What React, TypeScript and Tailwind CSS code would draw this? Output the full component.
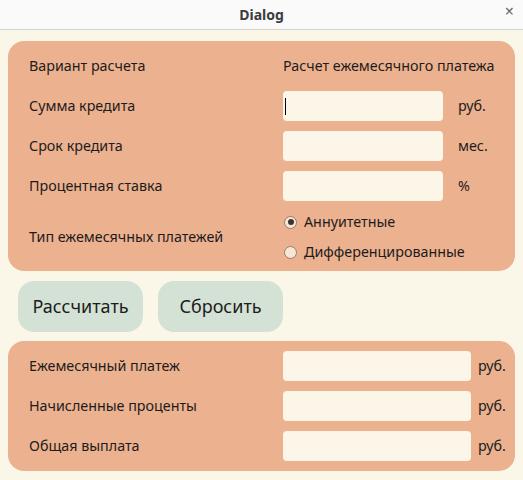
import React from "react";

const font = { fontFamily: '"Noto Sans", "Open Sans", sans-serif' };

function Field({ cursor = false, w }: { cursor?: boolean; w: string }) {
  return (
    <div className={`h-[30px] ${w} rounded-[4px] bg-[#fbf6e7] flex items-center pl-[2px]`}>
      {cursor && <div className="w-[1px] h-[17px] bg-black" />}
    </div>
  );
}

function Radio({ checked }: { checked?: boolean }) {
  return (
    <div className="w-[13px] h-[13px] rounded-full border border-[#9c7a68] bg-[#f6e6d8] flex items-center justify-center">
      {checked && <div className="w-[6px] h-[6px] rounded-full bg-[#3a3330]" />}
    </div>
  );
}

export default function App() {
  return (
    <div className="w-[523px] h-[480px] bg-[#fbf7e8] text-[#1c1c1c] text-[14.3px] flex flex-col" style={font}>
      <div className="h-[30px] shrink-0 bg-[#fafafa] border-b border-[#d3d3d3] flex items-center justify-center relative">
        <span className="font-bold text-[14px] text-[#3c3c3c]">Dialog</span>
        <span className="absolute right-[9px] top-[3px] text-[16px] text-[#666] leading-none">×</span>
      </div>

      <div className="px-[8px] pt-[11px] flex flex-col">
        <div className="rounded-[16px] bg-[#ecb18f] pl-[21px] pt-[10px] pb-[8px] grid grid-cols-[254px_160px_1fr] gap-y-[10px] items-center">
          <div className="h-[30px] flex items-center">Вариант расчета</div>
          <div className="h-[30px] flex items-center col-span-2 whitespace-nowrap">Расчет ежемесячного платежа</div>

          <div>Сумма кредита</div>
          <Field cursor w="w-[160px]" />
          <div className="pl-[15px]">руб.</div>

          <div>Срок кредита</div>
          <Field w="w-[160px]" />
          <div className="pl-[15px]">мес.</div>

          <div>Процентная ставка</div>
          <Field w="w-[160px]" />
          <div className="pl-[15px]">%</div>

          <div className="self-center">Тип ежемесячных платежей</div>
          <div className="col-span-2 flex flex-col gap-[8px] pl-[1px]">
            <div className="h-[22px] flex items-center gap-[7px]">
              <Radio checked />
              <span>Аннуитетные</span>
            </div>
            <div className="h-[22px] flex items-center gap-[7px]">
              <Radio />
              <span>Дифференцированные</span>
            </div>
          </div>
        </div>

        <div className="flex gap-[15px] px-[10px] pt-[10px] pb-[9px]">
          <div className="w-[125px] h-[51px] rounded-[16px] bg-[#d4e2d5] flex items-center justify-center text-[18px]">Рассчитать</div>
          <div className="w-[125px] h-[51px] rounded-[16px] bg-[#d4e2d5] flex items-center justify-center text-[18px]">Сбросить</div>
        </div>

        <div className="rounded-[16px] bg-[#ecb18f] pl-[21px] py-[10px] grid grid-cols-[254px_188px_1fr] gap-y-[10px] items-center">
          <div>Ежемесячный платеж</div>
          <Field w="w-[188px]" />
          <div className="pl-[7px]">руб.</div>

          <div>Начисленные проценты</div>
          <Field w="w-[188px]" />
          <div className="pl-[7px]">руб.</div>

          <div>Общая выплата</div>
          <Field w="w-[188px]" />
          <div className="pl-[7px]">руб.</div>
        </div>
      </div>
    </div>
  );
}
